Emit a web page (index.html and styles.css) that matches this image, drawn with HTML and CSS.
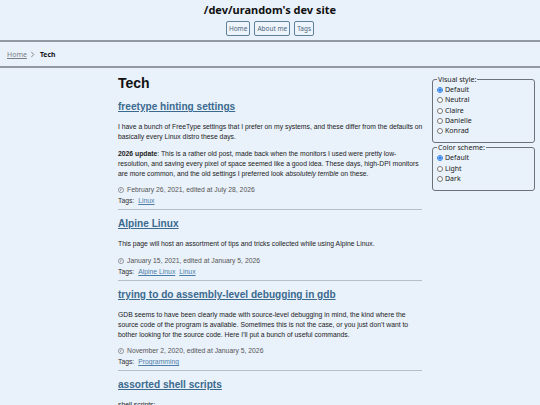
FILE: index.html
```html
<!DOCTYPE html>
<html>
<head>
<meta charset="utf-8">
<link rel="stylesheet" href="styles.css">
</head>
<body>
<header class="site-header">
  <div class="site-title">/dev/urandom's dev site</div>
  <nav class="site-nav">
    <a class="nav-btn" href="#">Home</a>
    <a class="nav-btn" href="#">About me</a>
    <a class="nav-btn" href="#">Tags</a>
  </nav>
</header>
<div class="crumbs">
  <a class="crumb-link" href="#">Home</a>
  <svg class="chev" viewBox="0 0 6 8" width="5" height="7"><path d="M1.5 0.8 L4.5 4 L1.5 7.2" fill="none" stroke="#555" stroke-width="0.8"/></svg>
  <span class="crumb-cur">Tech</span>
</div>
<div class="layout">
  <main class="content">
    <h1 class="page-title">Tech</h1>

    <article class="post">
      <h2 class="post-title"><a href="#">freetype hinting settings</a></h2>
      <p>I have a bunch of FreeType settings that I prefer on my systems, and these differ from the defaults on basically every Linux distro these days.</p>
      <p><b>2026 update</b>: This is a rather old post, made back when the monitors I used were pretty low-resolution, and saving every pixel of space seemed like a good idea. These days, high-DPI monitors are more common, and the old settings I preferred look <i>absolutely terrible</i> on these.</p>
      <div class="meta"><svg class="clock" viewBox="0 0 10 10" width="6" height="6"><circle cx="5" cy="5" r="4.3" fill="none" stroke="#555" stroke-width="0.9"/><path d="M5 2.4 V5 L3.2 6.4" fill="none" stroke="#555" stroke-width="0.9"/></svg><span>February 26, 2021, edited at July 28, 2026</span></div>
      <div class="tags"><span>Tags:</span><a href="#">Linux</a></div>
    </article>

    <article class="post">
      <h2 class="post-title"><a href="#">Alpine Linux</a></h2>
      <p>This page will host an assortment of tips and tricks collected while using Alpine Linux.</p>
      <div class="meta"><svg class="clock" viewBox="0 0 10 10" width="6" height="6"><circle cx="5" cy="5" r="4.3" fill="none" stroke="#555" stroke-width="0.9"/><path d="M5 2.4 V5 L3.2 6.4" fill="none" stroke="#555" stroke-width="0.9"/></svg><span>January 15, 2021, edited at January 5, 2026</span></div>
      <div class="tags"><span>Tags:</span><a href="#">Alpine Linux</a><a href="#">Linux</a></div>
    </article>

    <article class="post">
      <h2 class="post-title"><a href="#">trying to do assembly-level debugging in gdb</a></h2>
      <p>GDB seems to have been clearly made with source-level debugging in mind, the kind where the source code of the program is available. Sometimes this is not the case, or you just don’t want to bother looking for the source code. Here I’ll put a bunch of useful commands.</p>
      <div class="meta"><svg class="clock" viewBox="0 0 10 10" width="6" height="6"><circle cx="5" cy="5" r="4.3" fill="none" stroke="#555" stroke-width="0.9"/><path d="M5 2.4 V5 L3.2 6.4" fill="none" stroke="#555" stroke-width="0.9"/></svg><span>November 2, 2020, edited at January 5, 2026</span></div>
      <div class="tags"><span>Tags:</span><a href="#">Programming</a></div>
    </article>

    <article class="post">
      <h2 class="post-title"><a href="#">assorted shell scripts</a></h2>
      <p>shell scripts:</p>
    </article>
  </main>
  <aside class="sidebar">
    <fieldset class="box">
      <legend>Visual style:</legend>
      <label class="opt"><input type="radio" name="vs" checked> Default</label>
      <label class="opt"><input type="radio" name="vs"> Neutral</label>
      <label class="opt"><input type="radio" name="vs"> Claire</label>
      <label class="opt"><input type="radio" name="vs"> Danielle</label>
      <label class="opt"><input type="radio" name="vs"> Konrad</label>
    </fieldset>
    <fieldset class="box">
      <legend>Color scheme:</legend>
      <label class="opt"><input type="radio" name="cs" checked> Default</label>
      <label class="opt"><input type="radio" name="cs"> Light</label>
      <label class="opt"><input type="radio" name="cs"> Dark</label>
    </fieldset>
  </aside>
</div>
</body>
</html>
```
FILE: styles.css
```css
html, body {
  margin: 0;
  padding: 0;
  background: #e9f1fb;
  color: #1a1a1a;
}
body {
  font-family: "Liberation Sans", Arial, sans-serif;
  height: 405px;
  overflow: hidden;
}
.site-header {
  text-align: center;
  padding-top: 2px;
  padding-bottom: 4px;
  border-bottom: 2px solid #9299a1;
  font-family: "Noto Sans", sans-serif;
}
.site-title {
  font-size: 11px;
  font-weight: bold;
  line-height: 16px;
  color: #111;
}
.site-nav {
  display: flex;
  justify-content: center;
  gap: 4px;
  margin-top: 3px;
}
.nav-btn {
  display: block;
  font-size: 6.5px;
  line-height: 10px;
  padding: 1.5px 2px;
  border: 1px solid #5f8199;
  border-radius: 2px;
  color: #4b677c;
  text-decoration: none;
  background: #eef4fc;
}
.crumbs {
  display: flex;
  align-items: center;
  gap: 3px;
  padding: 7px 7px;
  height: 10px;
  font-family: "Noto Sans", sans-serif;
  font-size: 7px;
  border-bottom: 2px solid #9299a1;
}
.crumb-link {
  color: #7a7f86;
  text-decoration: underline;
}
.crumb-cur {
  font-weight: bold;
  color: #111;
  font-size: 6.8px;
  margin-left: 2px;
}
.layout {
  display: grid;
  grid-template-columns: 1fr 304px 1fr;
}
.content {
  grid-column: 2;
  padding-top: 6px;
}
.page-title {
  font-size: 14px;
  line-height: 18px;
  margin: 0 0 8px 0;
  color: #111;
}
.post {
  border-bottom: 1px solid #b7bec6;
  padding-bottom: 3px;
  margin-bottom: 7px;
}
.post-title {
  font-size: 10.1px;
  line-height: 14px;
  margin: 0 0 8px 0;
}
.post-title a {
  color: #3b6a8e;
  text-decoration: underline;
}
.post p {
  font-size: 6.8px;
  line-height: 9.75px;
  margin: 0 -4px 7.5px 0;
  color: #222;
}
.post p:last-of-type {
  margin-bottom: 6px;
}
.meta {
  display: flex;
  align-items: center;
  gap: 3px;
  font-size: 6.8px;
  line-height: 11px;
  color: #555;
}
.tags {
  display: flex;
  gap: 4px;
  font-size: 6.8px;
  line-height: 11px;
  color: #333;
}
.tags a {
  color: #4b7da6;
}
.sidebar {
  grid-column: 3;
  justify-self: end;
  width: 103px;
  margin-right: 5px;
  padding-top: 7px;
  display: flex;
  flex-direction: column;
  gap: 0;
  font-family: "Noto Sans", sans-serif;
}
.box {
  margin: 0;
  padding: 1px 4px 6px 4px;
  border: 1px solid #6d7278;
  border-radius: 3px;
  display: flex;
  flex-direction: column;
}
.box legend {
  font-size: 7px;
  line-height: 9px;
  padding: 0 1px;
  color: #222;
}
.opt {
  display: flex;
  align-items: center;
  gap: 2px;
  font-size: 7px;
  line-height: 10.25px;
  color: #222;
}
.opt input {
  width: 6px;
  height: 6px;
  margin: 0;
  accent-color: #2f7fe6;
}
```
